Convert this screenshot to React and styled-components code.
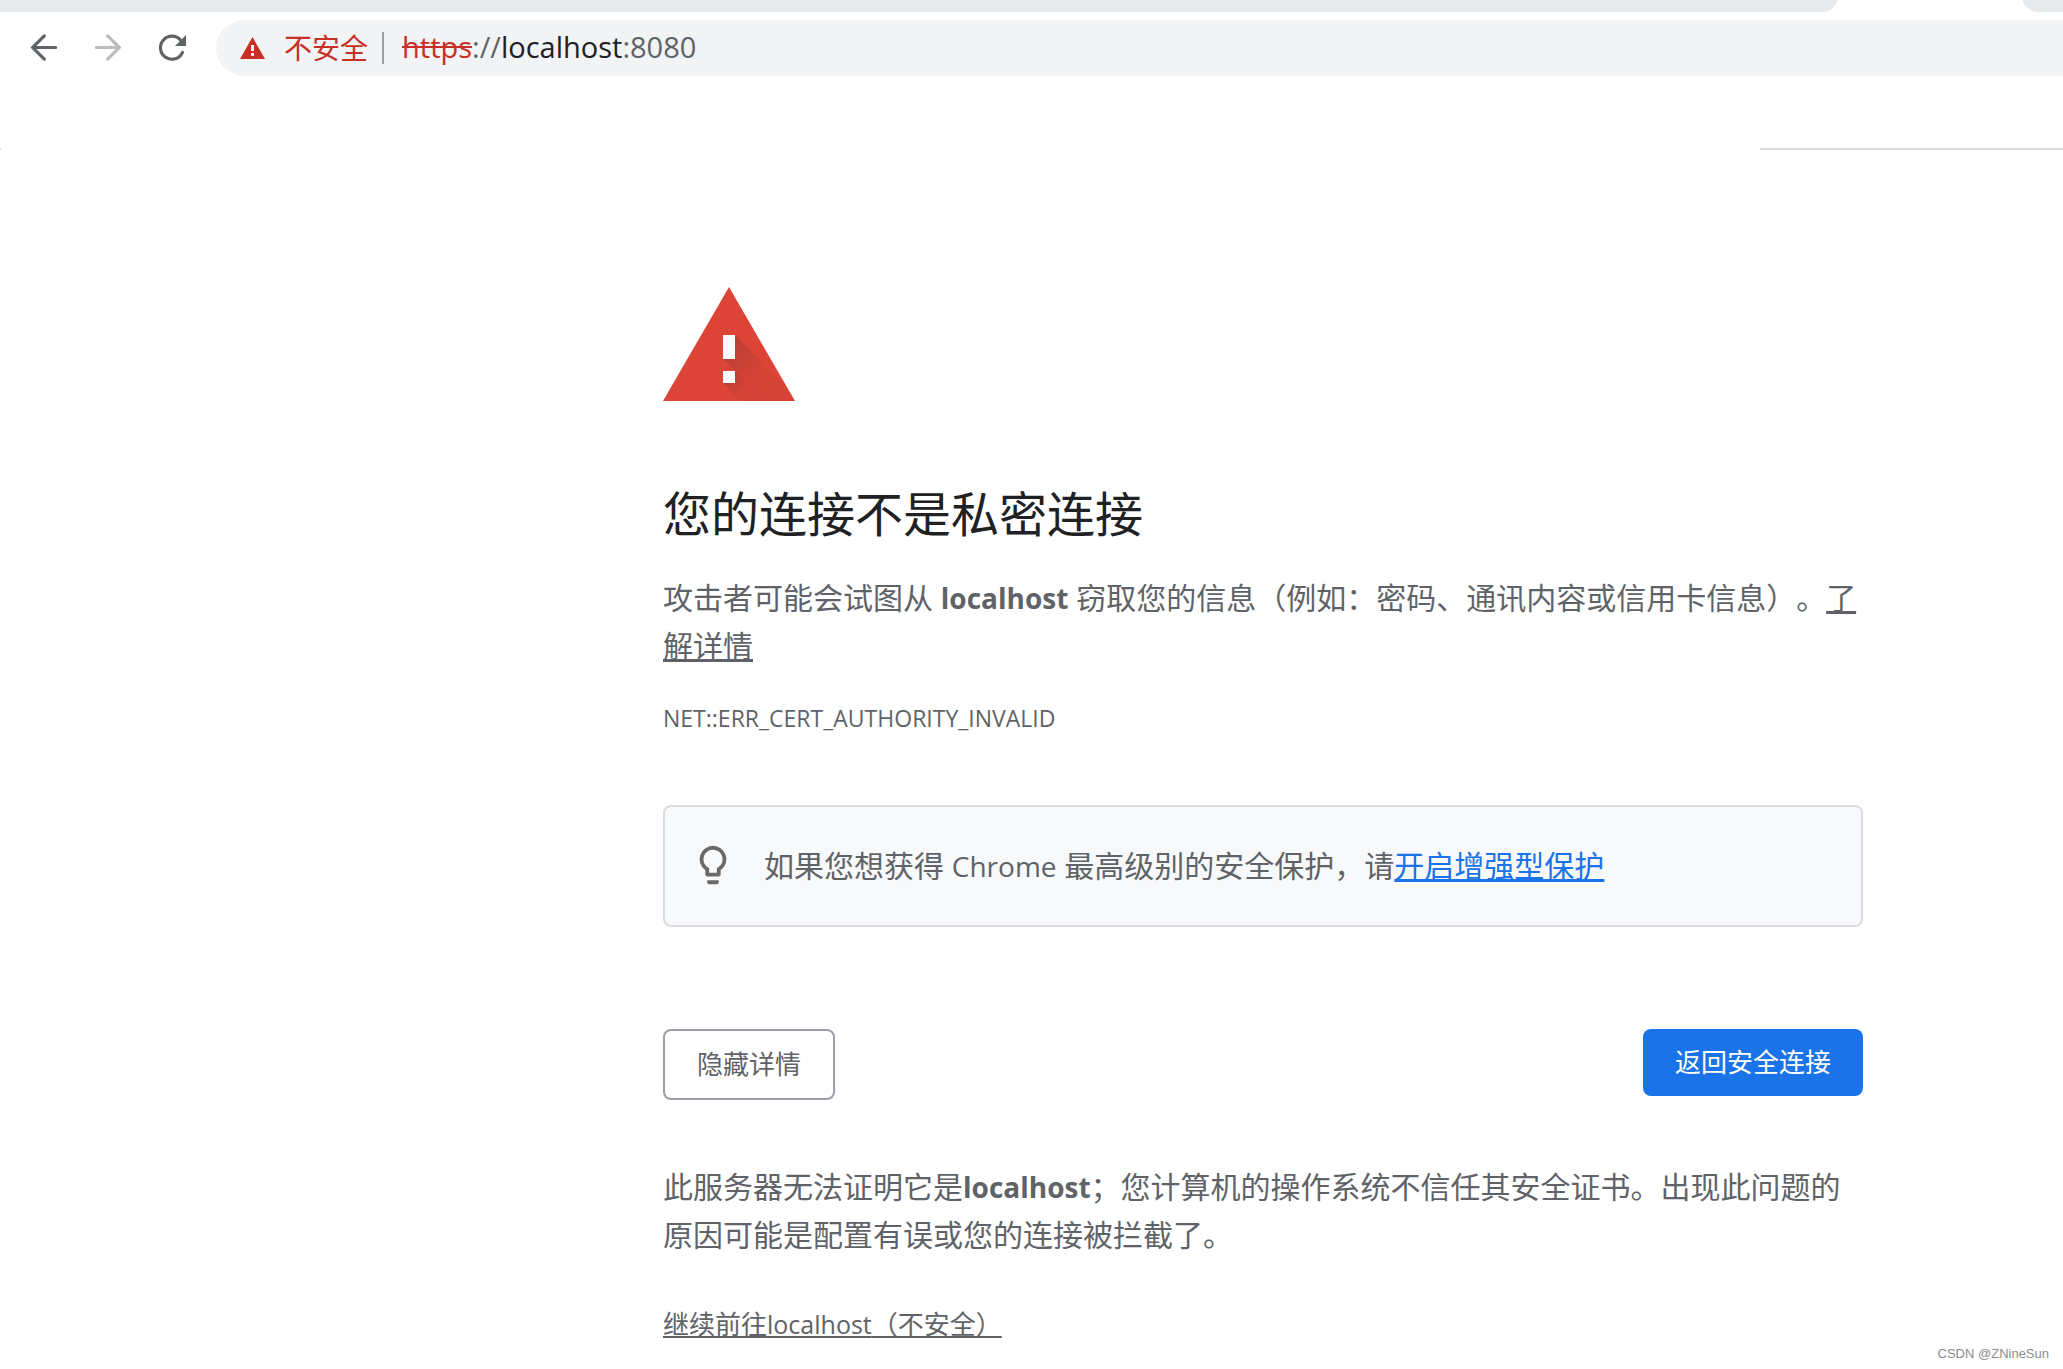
import React from "react";
import styled, { createGlobalStyle } from "styled-components";

const GlobalStyle = createGlobalStyle`
  * { box-sizing: border-box; }
  body {
    margin: 0;
    background: #fff;
    color: #5f6368;
    font-family: "Open Sans", "Noto Sans CJK SC", sans-serif;
    font-size: 30px;
    line-height: 48px;
    text-spacing-trim: space-all;
  }
  h1, p { margin: 0; }
`;

const Page = styled.div`
  position: relative;
  min-height: 100vh;
  overflow: hidden;
`;

const TabStrip = styled.div`
  display: flex;
  justify-content: space-between;
  height: 12px;
  overflow: hidden;
`;

const TabsBefore = styled.div`
  flex: 1;
  margin: -28px 184px 0 0;
  height: 40px;
  background: #e6eaed;
  border-bottom-right-radius: 16px;
`;

const TabsAfter = styled.div`
  width: 41px;
  margin-top: -28px;
  height: 40px;
  background: #e6eaed;
  border-bottom-left-radius: 16px;
`;

const Toolbar = styled.nav`
  display: flex;
  align-items: center;
  gap: 24px;
  padding: 8px 0 8px 24px;
`;

const NavButton = styled.button`
  display: flex;
  width: 40px;
  height: 40px;
  padding: 0;
  border: 0;
  background: none;
  color: ${(p) => (p.disabled ? "#bbbcbe" : "#5f6368")};

  svg {
    width: 40px;
    height: 40px;
    fill: none;
    stroke: currentColor;
    stroke-width: 1.9;
    stroke-linecap: round;
  }
`;

const AddressBar = styled.div`
  display: flex;
  flex: 1;
  align-items: center;
  height: 56px;
  padding-left: 24px;
  border-radius: 28px 0 0 28px;
  background: #f1f3f4;
`;

const SecurityButton = styled.button`
  display: flex;
  align-items: center;
  gap: 19px;
  padding: 0 14px 0 0;
  border: 0;
  border-right: 2px solid #9aa0a6;
  background: none;
  color: #c93025;
  font: 28px/32px "Open Sans", "Noto Sans CJK SC", sans-serif;

  svg { width: 25px; height: 22px; }
`;

const Url = styled.span`
  padding: 0 0 2px 18px;
  line-height: 40px;
  font-size: 29px;
`;

const Scheme = styled.s`
  color: #c93025;
`;

const Host = styled.span`
  color: #202124;
`;

const Dividers = styled.div`
  display: flex;
  justify-content: space-between;
  margin-top: 64px;
`;

const Divider = styled.div`
  width: ${(p) => p.$width}px;
  height: 2px;
  background: #dadce0;
`;

const Body = styled.main`
  display: grid;
  grid-template-columns: minmax(24px, 663fr) minmax(0, 1200px) minmax(24px, 200fr);
  padding-top: 137px;
`;

const Content = styled.div`
  grid-column: 2;
  display: flex;
  flex-direction: column;
  align-items: flex-start;
`;

const WarningIcon = styled.svg`
  width: 132px;
  height: 114px;
`;

const Title = styled.h1`
  margin-top: 81px;
  color: #202124;
  font-size: 48px;
  font-weight: 400;
  line-height: 64px;
`;

const Paragraph = styled.p`
  margin-top: ${(p) => p.$top}px;
`;

const Latin = styled.span`
  font-size: ${(p) => p.$size || 28}px;
  font-weight: ${(p) => (p.$bold ? 700 : 400)};
  line-height: 1;
`;

const TextLink = styled.a`
  color: ${(p) => (p.$blue ? "#1a73e8" : "inherit")};
  text-decoration: underline;
`;

const ErrorCode = styled.p`
  margin-top: 28px;
  font-size: 23px;
  line-height: 40px;
`;

const Tip = styled.aside`
  display: flex;
  align-items: flex-start;
  gap: 28px;
  width: 100%;
  margin-top: 67px;
  padding: 35px 25px;
  border: 2px solid #dadce0;
  border-radius: 8px;
  background: #f8f9fb;

  svg { flex: none; width: 46px; height: 46px; fill: #696969; }
`;

const Actions = styled.div`
  display: flex;
  align-items: flex-start;
  justify-content: space-between;
  width: 100%;
  margin-top: 102px;
`;

const ActionButton = styled.button`
  padding: 16px 32px;
  border: ${(p) => (p.$primary ? "0" : "2px solid #9aa0a6")};
  border-radius: 8px;
  background: ${(p) => (p.$primary ? "#1a73e8" : "#fff")};
  color: ${(p) => (p.$primary ? "#fff" : "#5f6368")};
  font: 26px/35px "Open Sans", "Noto Sans CJK SC", sans-serif;
`;

const ProceedLink = styled(TextLink)`
  margin-top: 41px;
  font-size: 26px;
`;

const Watermark = styled.div`
  position: absolute;
  right: 14px;
  bottom: 5px;
  color: #8c8c8c;
  font: 13px/20px "Liberation Sans", Arial, sans-serif;
`;

function Warning() {
  return (
    <WarningIcon viewBox="0 0 132 114" aria-hidden="true">
      <defs>
        <linearGradient id="shade" gradientUnits="userSpaceOnUse" x1="62" y1="58" x2="90" y2="86">
          <stop offset="0" stopColor="#262626" stopOpacity="0.2" />
          <stop offset="1" stopColor="#262626" stopOpacity="0.03" />
        </linearGradient>
        <linearGradient id="dotShade" gradientUnits="userSpaceOnUse" x1="64" y1="88" x2="80" y2="104">
          <stop offset="0" stopColor="#262626" stopOpacity="0.2" />
          <stop offset="1" stopColor="#262626" stopOpacity="0.03" />
        </linearGradient>
        <clipPath id="triangle"><path d="M66 0 132 114H0Z" /></clipPath>
      </defs>
      <g clipPath="url(#triangle)">
        <path fill="#db4437" d="M0 0h132v114H0z" />
        <path fill="url(#shade)" d="M72 48l66 66H102L72 84 60 72z" />
        <path fill="url(#dotShade)" d="M72 84l30 30H78L60 96z" />
      </g>
      <path fill="#fff" d="M60 48h12v24H60zM60 84h12v12H60z" />
    </WarningIcon>
  );
}

export default function App() {
  return (
    <>
      <GlobalStyle />
      <Page lang="zh-CN">
        <TabStrip>
          <TabsBefore />
          <TabsAfter />
        </TabStrip>
        <Toolbar>
          <NavButton aria-label="后退">
            <svg viewBox="0 0 24 24"><path d="M19 11.7H5.2M12.2 4.7l-7 7 7 7" /></svg>
          </NavButton>
          <NavButton aria-label="前进" disabled>
            <svg viewBox="0 0 24 24"><path d="M5 11.7h13.8M11.8 4.7l7 7-7 7" /></svg>
          </NavButton>
          <NavButton aria-label="重新加载">
            <svg viewBox="0 0 24 24">
              <path d="M17.2 7.3A6.9 6.9 0 1 0 18.3 14.6" />
              <path fill="currentColor" stroke="none" d="M20.4 4.2v6.6h-6.6z" />
            </svg>
          </NavButton>
          <AddressBar>
            <SecurityButton>
              <svg viewBox="0 0 25 22" aria-hidden="true">
                <path fill="#c93025" d="M12.5 0 25 22H0z" />
                <path fill="#f1f3f4" d="M11 8h3v6h-3zM11 16h3v3h-3z" />
              </svg>
              不安全
            </SecurityButton>
            <Url><Scheme>https</Scheme>://<Host>localhost</Host>:8080</Url>
          </AddressBar>
        </Toolbar>
        <Dividers>
          <Divider $width={1} />
          <Divider $width={303} />
        </Dividers>
        <Body>
          <Content>
            <Warning />
            <Title>您的连接不是私密连接</Title>
            <Paragraph $top={28}>
              攻击者可能会试图从 <Latin as="strong" $bold>localhost</Latin> 窃取您的信息（例如：密码、通讯内容或信用卡信息）。<TextLink href="#details">了解详情</TextLink>
            </Paragraph>
            <ErrorCode>NET::ERR_CERT_AUTHORITY_INVALID</ErrorCode>
            <Tip>
              <svg viewBox="0 0 24 24" aria-hidden="true">
                <path d="M9 21c0 .55.45 1 1 1h4c.55 0 1-.45 1-1v-1H9v1zm3-19a7 7 0 0 0-4 12.74V17c0 .55.45 1 1 1h6c.55 0 1-.45 1-1v-2.26A7 7 0 0 0 12 2zm2.85 11.1-.85.6V16h-4v-2.3l-.85-.6A5 5 0 1 1 17 9a5 5 0 0 1-2.15 4.1z" />
              </svg>
              <p>如果您想获得 <Latin>Chrome</Latin> 最高级别的安全保护，请<TextLink $blue href="#protection">开启增强型保护</TextLink></p>
            </Tip>
            <Actions>
              <ActionButton>隐藏详情</ActionButton>
              <ActionButton $primary>返回安全连接</ActionButton>
            </Actions>
            <Paragraph $top={63}>
              此服务器无法证明它是<Latin as="strong" $bold>localhost</Latin>；您计算机的操作系统不信任其安全证书。出现此问题的原因可能是配置有误或您的连接被拦截了。
            </Paragraph>
            <ProceedLink href="#proceed">继续前往<Latin $size={25}>localhost</Latin>（不安全）</ProceedLink>
          </Content>
        </Body>
        <Watermark>CSDN @ZNineSun</Watermark>
      </Page>
    </>
  );
}
